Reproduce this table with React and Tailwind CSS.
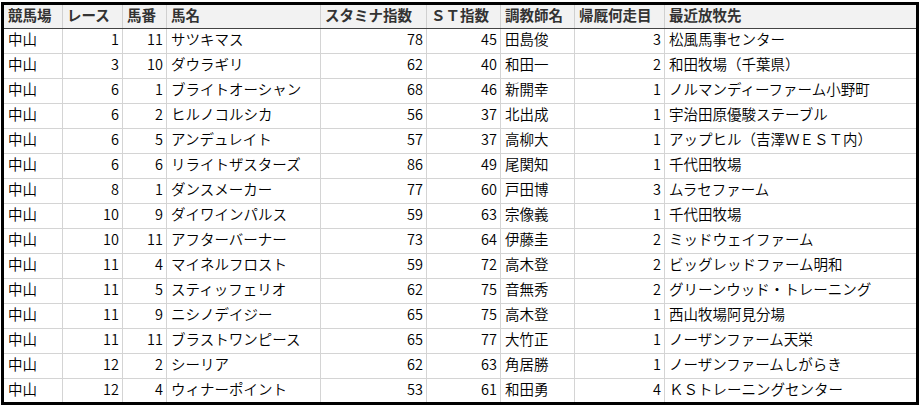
import React from "react";

const cols = [
  { w: "w-[59px]", align: "left" },
  { w: "w-[60px]", align: "right" },
  { w: "w-[44px]", align: "right" },
  { w: "w-[154px]", align: "left" },
  { w: "w-[106px]", align: "right" },
  { w: "w-[74px]", align: "right" },
  { w: "w-[74px]", align: "left" },
  { w: "w-[90px]", align: "right" },
  { w: "w-[251px]", align: "left" },
];

const headers = ["競馬場", "レース", "馬番", "馬名", "スタミナ指数", "ＳＴ指数", "調教師名", "帰厩何走目", "最近放牧先"];

const rows = [
  ["中山", "1", "11", "サツキマス", "78", "45", "田島俊", "3", "松風馬事センター"],
  ["中山", "3", "10", "ダウラギリ", "62", "40", "和田一", "2", "和田牧場（千葉県）"],
  ["中山", "6", "1", "ブライトオーシャン", "68", "46", "新開幸", "1", "ノルマンディーファーム小野町"],
  ["中山", "6", "2", "ヒルノコルシカ", "56", "37", "北出成", "1", "宇治田原優駿ステーブル"],
  ["中山", "6", "5", "アンデュレイト", "57", "37", "高柳大", "1", "アップヒル（吉澤ＷＥＳＴ内）"],
  ["中山", "6", "6", "リライトザスターズ", "86", "49", "尾関知", "1", "千代田牧場"],
  ["中山", "8", "1", "ダンスメーカー", "77", "60", "戸田博", "3", "ムラセファーム"],
  ["中山", "10", "9", "ダイワインパルス", "59", "63", "宗像義", "1", "千代田牧場"],
  ["中山", "10", "11", "アフターバーナー", "73", "64", "伊藤圭", "2", "ミッドウェイファーム"],
  ["中山", "11", "4", "マイネルフロスト", "59", "72", "高木登", "2", "ビッグレッドファーム明和"],
  ["中山", "11", "5", "スティッフェリオ", "62", "75", "音無秀", "2", "グリーンウッド・トレーニング"],
  ["中山", "11", "9", "ニシノデイジー", "65", "75", "高木登", "1", "西山牧場阿見分場"],
  ["中山", "11", "11", "ブラストワンピース", "65", "77", "大竹正", "1", "ノーザンファーム天栄"],
  ["中山", "12", "2", "シーリア", "62", "63", "角居勝", "1", "ノーザンファームしがらき"],
  ["中山", "12", "4", "ウィナーポイント", "53", "61", "和田勇", "4", "ＫＳトレーニングセンター"],
];

export default function App() {
  return (
    <div
      className="w-[920px] h-[407px] bg-white pt-[2px] pl-[1px] overflow-hidden text-[14.5px] leading-none"
      style={{ fontFamily: '"Noto Sans CJK JP", "Noto Sans", sans-serif' }}
    >
      <div className="w-[918px] h-[403px] border-[3px] border-black overflow-hidden">
        <div className="flex h-[24px] bg-[#f2f2f2] border-b border-[#444444]">
          {headers.map((h, i) => (
            <div
              key={i}
              className={`${cols[i].w} shrink-0 h-full flex items-center pl-[4px] pb-[2px] font-bold text-[#333333] ${i < 8 ? "border-r border-[#d0d0d0]" : ""}`}
            >
              {h}
            </div>
          ))}
        </div>
        {rows.map((r, ri) => (
          <div key={ri} className="flex h-[25px] border-b border-[#d4d4d4]">
            {r.map((c, ci) => (
              <div
                key={ci}
                className={`${cols[ci].w} shrink-0 h-full flex items-center whitespace-nowrap pb-[3px] font-[350] text-black ${
                  cols[ci].align === "right" ? "justify-end pr-[3px]" : "pl-[4px]"
                } ${ci < 8 ? "border-r border-[#d4d4d4]" : ""}`}
              >
                {c}
              </div>
            ))}
          </div>
        ))}
      </div>
    </div>
  );
}
